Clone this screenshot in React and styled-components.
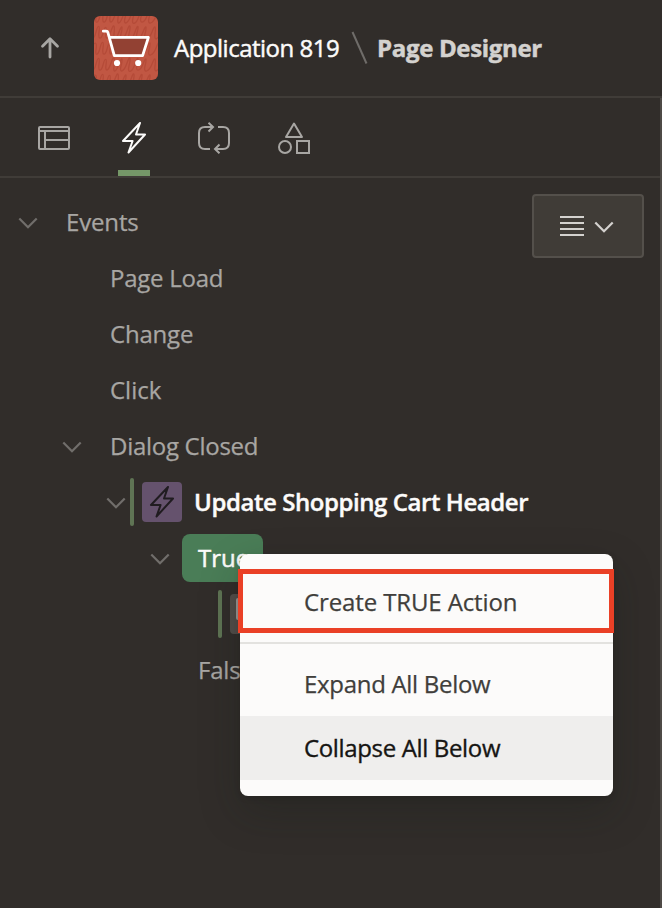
import React from "react";
import styled, { createGlobalStyle } from "styled-components";

const GlobalStyle = createGlobalStyle`
  * { box-sizing: border-box; }
  body { margin: 0; background: #312d2a; }
`;

const Page = styled.div`
  position: relative;
  display: flex;
  flex-direction: column;
  width: 662px;
  height: 908px;
  overflow: hidden;
  background: #312d2a;
  color: #a8a6a3;
  font-family: "Open Sans", "Noto Sans", sans-serif;
  font-size: 24px;
`;

const Header = styled.header`
  display: flex;
  align-items: center;
  height: 98px;
  padding: 0 0 0 38px;
  border-bottom: 2px solid #403c38;
`;

const AppIcon = styled.svg`
  flex: none;
  margin: 0 16px 0 32px;
  border-radius: 6px;
`;

const Text = styled.span`
  display: block;
  white-space: nowrap;
  line-height: 32px;
  color: ${(p) => p.$color || "inherit"};
  font-weight: ${(p) => p.$weight || 400};
  letter-spacing: ${(p) => p.$track || 0}px;
  -webkit-text-stroke: ${(p) => p.$stroke ?? 0.25}px currentColor;
`;

const Slash = styled.svg`
  flex: none;
  margin: 0 9px 0 10px;
`;

const Crumb = styled.div`
  flex: none;
  width: ${(p) => p.$w}px;
`;

const Workspace = styled.div`
  flex: 1;
  display: flex;
  flex-direction: column;
  border-right: 2px solid #4e4a46;
`;

const Tabs = styled.nav`
  display: flex;
  height: 80px;
  padding-left: 38px;
  gap: 48px;
  border-bottom: 2px solid #403c38;
`;

const Tab = styled.div`
  display: flex;
  width: 32px;
  padding-top: 24px;
  border-bottom: 6px solid ${(p) => (p.$active ? "#759768" : "transparent")};
  color: ${(p) => (p.$active ? "#fcfbfa" : "#a8a6a3")};
`;

const Panel = styled.div`
  display: flex;
  align-items: flex-start;
  padding: 16px 16px 0 0;
`;

const Tree = styled.div`
  flex: 1;
  min-width: 0;
`;

const Row = styled.div`
  display: flex;
  align-items: center;
  height: 56px;
  padding-left: ${(p) => p.$indent}px;
`;

const Twisty = styled.svg`
  flex: none;
  margin-top: 1px;
  margin-right: ${(p) => p.$gap}px;
`;

const Bar = styled.div`
  flex: none;
  width: 4px;
  height: 48px;
  margin-right: 8px;
  border-radius: 2px;
  background: #5f7454;
`;

const NodeIcon = styled.div`
  display: flex;
  align-items: center;
  justify-content: center;
  flex: none;
  width: 40px;
  height: 40px;
  margin-right: 12px;
  border-radius: 4px;
  background: ${(p) => p.$bg};
`;

const Pill = styled.div`
  display: flex;
  align-items: center;
  width: 81px;
  height: 48px;
  padding-left: 16px;
  border-radius: 8px;
  background: #4a7d57;
`;

const MenuButton = styled.button`
  display: flex;
  flex: none;
  align-items: center;
  justify-content: center;
  gap: 10px;
  width: 112px;
  height: 64px;
  padding: 0 2px 0 0;
  border: 2px solid #54504b;
  border-radius: 4px;
  background: #403c37;
`;

const ContextMenu = styled.div`
  position: absolute;
  left: 240px;
  top: 554px;
  width: 373px;
  padding: 16px 0;
  border-radius: 8px;
  background: #fcfbfa;
  box-shadow: 0 16px 40px rgba(20, 26, 22, 0.26), 0 2px 6px rgba(0, 0, 0, 0.12);
`;

const MenuItem = styled.div`
  display: flex;
  align-items: center;
  height: 64px;
  padding-left: 64px;
  color: ${(p) => (p.$hover ? "#161513" : "#403e3b")};
  background: ${(p) => (p.$hover ? "#efeeed" : "transparent")};
`;

const Separator = styled.div`
  height: 2px;
  margin: 8px 0;
  background: #e3e2df;
`;

const Highlight = styled.div`
  position: absolute;
  left: 238px;
  top: 569px;
  width: 376px;
  height: 64px;
  border: 5px solid #ea4026;
`;

const Chevron = ({ gap = 0, color = "#716e6b" }) => (
  <Twisty $gap={gap} width="20" height="12" viewBox="0 0 20 12" fill="none" stroke={color} strokeWidth="2.2">
    <path d="M1.3 1.5 L10 10.2 L18.7 1.5" />
  </Twisty>
);

const Bolt = ({ color = "currentColor" }) => (
  <svg width="32" height="32" viewBox="0 0 32 32" fill="none" stroke={color} strokeWidth="2" strokeLinejoin="round">
    <path d="M22 1 L5 19 L14.6 19 L10.5 30.5 L27 12.5 L18 12.5 Z" />
  </svg>
);

const Squiggles = () => (
  <g fill="none" stroke="#b04735" strokeWidth="1.3" strokeLinecap="round" opacity="0.75">
    {[-6, 10, 26, 42, 58].map((y, i) => (
      <path
        key={y}
        transform={`translate(${i % 2 ? -5 : -1} ${y})`}
        d="M0 3 C3 -1 4 2 3 8 S5 14 7 6 S11 -1 10 6 S12 15 14 7 S18 0 17 7 S19 14 22 5 S26 0 25 8 S27 14 30 6 S34 0 32 8 S35 14 38 5 S42 0 40 8 S43 15 46 6 S50 0 48 7 S51 14 54 6 S58 0 56 8 S60 14 63 6 S67 0 66 8 S69 13 71 8"
      />
    ))}
  </g>
);

export default function App() {
  return (
    <Page>
      <GlobalStyle />
      <Header>
        <svg width="24" height="24" viewBox="0 0 24 24" fill="none" stroke="#a8a6a3" strokeWidth="2.8" strokeLinecap="round" strokeLinejoin="round">
          <path d="M12 21 V3 M4.5 10.3 L12 2.8 L19.5 10.3" />
        </svg>
        <AppIcon width="64" height="64" viewBox="0 0 64 64">
          <rect width="64" height="64" fill="#c15743" />
          <Squiggles />
          <path d="M16 21.5 H54 L49 39.7 H20.5 Z" fill="#924133" />
          <path d="M9.3 15.2 H12.2 Q13.5 15.2 13.9 16.5 L20.3 39.6 H48.6 L54.4 21.4 H15.5" fill="none" stroke="#fff" strokeWidth="2.8" strokeLinecap="round" strokeLinejoin="round" />
          <circle cx="23" cy="47" r="3.1" fill="#fff" />
          <circle cx="44.2" cy="47" r="3.1" fill="#fff" />
        </AppIcon>
        <Crumb $w={167}>
          <Text $color="#fcfbfa" $stroke={0.45} $track={-0.5}>Application 819</Text>
        </Crumb>
        <Slash width="17" height="34" viewBox="0 0 17 34" stroke="#6f6c69" strokeWidth="2">
          <path d="M1.5 1 L15.5 32.5" />
        </Slash>
        <Text $color="#d4d2cf" $weight={700} $stroke={0.5} $track={-0.33}>Page Designer</Text>
      </Header>
      <Workspace>
        <Tabs>
          <Tab>
            <svg width="32" height="32" viewBox="0 0 32 32" fill="none" stroke="currentColor" strokeWidth="2">
              <rect x="1" y="5" width="30" height="22" rx="1" />
              <path d="M1 9 H31 M7 9 V27 M7 18 H31" />
            </svg>
          </Tab>
          <Tab $active>
            <Bolt />
          </Tab>
          <Tab>
            <svg width="32" height="32" viewBox="0 0 32 32" fill="none" stroke="currentColor" strokeWidth="2">
              <path d="M12 27 H7 Q1 27 1 21 V11 Q1 5 7 5 H15 M10.5 .8 L15 5 L10.5 9.5 M20 5 H25 Q31 5 31 11 V21 Q31 27 25 27 H17 M21.5 22.5 L17 27 L21.5 31.3" />
            </svg>
          </Tab>
          <Tab>
            <svg width="32" height="32" viewBox="0 0 32 32" fill="none" stroke="currentColor" strokeWidth="2">
              <path d="M16 1.5 L24 15 H8 Z" strokeLinejoin="round" />
              <circle cx="7" cy="25" r="6" />
              <rect x="19" y="19" width="12" height="12" />
            </svg>
          </Tab>
        </Tabs>
        <Panel>
          <Tree>
            <Row $indent={18}>
              <Chevron gap={28} />
              <Text $track={-0.15}>Events</Text>
            </Row>
            <Row $indent={110}><Text $track={-0.25}>Page Load</Text></Row>
            <Row $indent={110}><Text $track={-0.2}>Change</Text></Row>
            <Row $indent={110}><Text>Click</Text></Row>
            <Row $indent={62}>
              <Chevron gap={28} />
              <Text $track={-0.28}>Dialog Closed</Text>
            </Row>
            <Row $indent={106}>
              <Chevron gap={4} />
              <Bar />
              <NodeIcon $bg="#65526d"><Bolt color="#201c20" /></NodeIcon>
              <Text $color="#fcfbfa" $weight={600} $stroke={0.4} $track={-0.43}>Update Shopping Cart Header</Text>
            </Row>
            <Row $indent={150}>
              <Chevron gap={12} />
              <Pill><Text $color="#fcfbfa" $stroke={0.5}>True</Text></Pill>
            </Row>
            <Row $indent={218}>
              <Bar />
              <NodeIcon $bg="#524d49">
                <svg width="28" height="32" viewBox="0 0 28 32">
                  <rect x="0" y="0" width="28" height="22" rx="2" fill="#9b9895" />
                </svg>
              </NodeIcon>
            </Row>
            <Row $indent={198}><Text $track={-0.2}>False</Text></Row>
          </Tree>
          <MenuButton>
            <svg width="24" height="20" viewBox="0 0 24 20" stroke="#d4d2cf" strokeWidth="2">
              <path d="M0 1 H24 M0 7 H24 M0 13 H24 M0 19 H24" />
            </svg>
            <Chevron color="#d4d2cf" />
          </MenuButton>
        </Panel>
      </Workspace>
      <ContextMenu>
        <MenuItem><Text $track={-0.12}>Create TRUE Action</Text></MenuItem>
        <Separator />
        <MenuItem><Text $track={-0.3}>Expand All Below</Text></MenuItem>
        <MenuItem $hover><Text $stroke={0.35} $track={-0.35}>Collapse All Below</Text></MenuItem>
      </ContextMenu>
      <Highlight />
    </Page>
  );
}
